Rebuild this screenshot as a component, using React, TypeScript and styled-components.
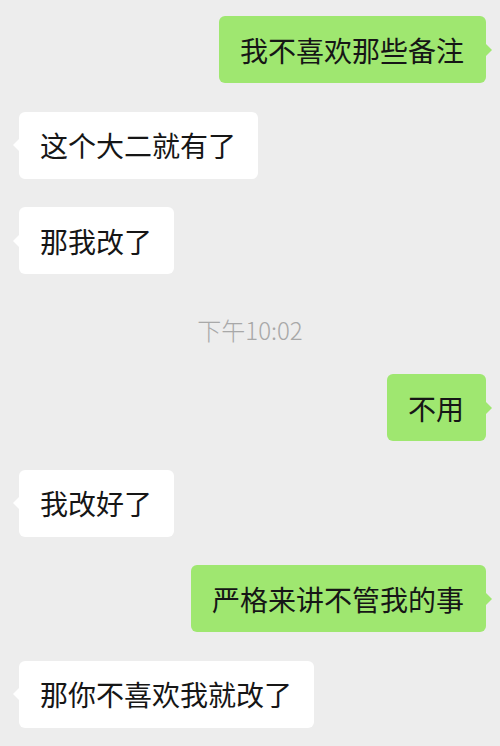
import React from 'react';
import styled, { createGlobalStyle } from 'styled-components';

const GlobalStyle = createGlobalStyle`
  html, body {
    margin: 0;
    padding: 0;
    background: #ededed;
  }
  body {
    font-family: 'Noto Sans CJK SC', 'Noto Sans', sans-serif;
  }
`;

type Side = 'left' | 'right';

interface Message {
  id: number;
  side?: Side;
  text: string;
  time?: boolean;
}

const messages: Message[] = [
  { id: 1, side: 'right', text: '我不喜欢那些备注' },
  { id: 2, side: 'left', text: '这个大二就有了' },
  { id: 3, side: 'left', text: '那我改了' },
  { id: 4, time: true, text: '下午10:02' },
  { id: 5, side: 'right', text: '不用' },
  { id: 6, side: 'left', text: '我改好了' },
  { id: 7, side: 'right', text: '严格来讲不管我的事' },
  { id: 8, side: 'left', text: '那你不喜欢我就改了' },
];

const Chat = styled.div`
  width: 500px;
  height: 746px;
  overflow: hidden;
  display: flex;
  flex-direction: column;
  gap: 28.5px;
  padding-top: 16px;
  box-sizing: border-box;
`;

const Row = styled.div<{ $side: Side }>`
  display: flex;
  justify-content: ${({ $side }) => ($side === 'right' ? 'flex-end' : 'flex-start')};
  padding: ${({ $side }) => ($side === 'right' ? '0 14px 0 0' : '0 0 0 19px')};
`;

const Bubble = styled.div<{ $side: Side }>`
  position: relative;
  height: 67px;
  display: flex;
  align-items: center;
  padding: 0 22px 0 21px;
  border-radius: 6px;
  font-size: 28px;
  color: #161616;
  background: ${({ $side }) => ($side === 'right' ? '#9fe770' : '#ffffff')};

  &::after {
    content: '';
    position: absolute;
    top: 50%;
    margin-top: -7px;
    border: 7px solid transparent;
    ${({ $side }) =>
      $side === 'right'
        ? 'right: -13px; border-left: 7px solid #9fe770;'
        : 'left: -13px; border-right: 7px solid #ffffff;'}
  }
`;

const Time = styled.div`
  text-align: center;
  font-size: 24px;
  font-weight: 300;
  line-height: 26px;
  color: #a8a8a8;
  padding: 14px 0 3px;
`;

const App: React.FC = () => (
  <>
    <GlobalStyle />
    <Chat>
      {messages.map(msg =>
        msg.time ? (
          <Time key={msg.id}>{msg.text}</Time>
        ) : (
          <Row key={msg.id} $side={msg.side!}>
            <Bubble $side={msg.side!}>{msg.text}</Bubble>
          </Row>
        )
      )}
    </Chat>
  </>
);

export default App;
